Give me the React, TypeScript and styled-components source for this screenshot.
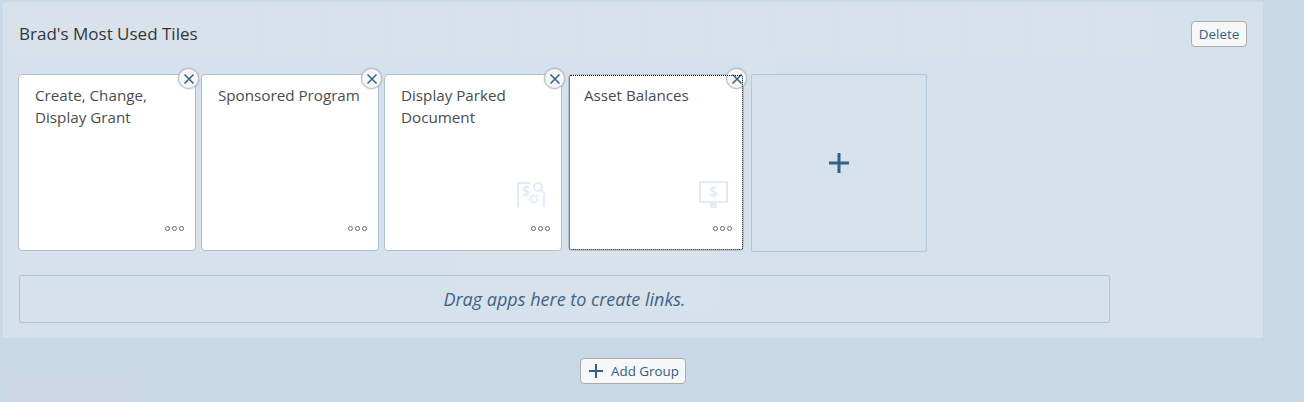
import React from "react";
import styled, { createGlobalStyle } from "styled-components";

const Global = createGlobalStyle`
  html, body { margin: 0; padding: 0; height: 100%; }
  body { background: #c8d8e6; font-family: "Open Sans", "Noto Sans", sans-serif; overflow: hidden; }
`;

const solid = (c: string) => `linear-gradient(${c}, ${c})`;
const base = "#d5e2ed";
const block = "#d9e1ea";

const Page = styled.div`
  width: 1304px;
  height: 402px;
  padding-top: 2px;
  box-sizing: border-box;
  display: flex;
  flex-direction: column;
  overflow: hidden;
  background: ${solid("#ccd8e5")} 10px 372px / 120px 30px no-repeat;
`;

const Section = styled.section`
  width: 1260px;
  height: 336px;
  margin-left: 3px;
  box-sizing: border-box;
  padding: 0 16px 0 15px;
  border-radius: 2px;
  background-color: ${base};
  background-image:
    ${solid(base)},
    ${solid(block)},
    ${solid(base)},
    linear-gradient(90deg, #d5e1ec 0 9px, ${block} 9px 64px),
    ${solid(block)},
    ${solid("#d8e2eb")};
  background-position:
    1151px 0,
    7px 0,
    0 0,
    254px 0,
    457px 248px,
    740px 51px;
  background-size:
    109px 51px,
    247px 51px,
    254px 51px,
    64px 51px,
    256px 58px,
    35px 21px;
  background-repeat: no-repeat, no-repeat, no-repeat, repeat-x, no-repeat, no-repeat;
  display: flex;
  flex-direction: column;
`;

const Header = styled.header`
  display: flex;
  justify-content: space-between;
  align-items: center;
  height: 64px;
  padding: 0 0 0 1px;
`;

const Title = styled.h2`
  margin: -2px 0 0;
  font-size: 17px;
  font-weight: 400;
  color: #32363a;
`;

const SmallButton = styled.button`
  height: 26px;
  box-sizing: border-box;
  display: inline-flex;
  align-items: center;
  background: #f7f7f7;
  border: 1px solid #ababab;
  border-radius: 4px;
  color: #346187;
  font-family: inherit;
  font-size: 13.4px;
`;

const DeleteButton = styled(SmallButton)`
  width: 56px;
  justify-content: center;
  padding: 0;
`;

const TileRow = styled.div`
  display: flex;
  gap: 5px;
  margin-top: 8px;
  align-items: flex-start;
`;

const Tile = styled.div<{ $focused?: boolean }>`
  position: relative;
  width: ${(p) => (p.$focused ? "176px" : "178px")};
  margin-left: ${(p) => (p.$focused ? "1px" : "0")};
  height: 177px;
  box-sizing: border-box;
  background: #fff;
  border: 1px solid #b2bfcc;
  border-radius: 4px;
  padding: 9px ${(p) => (p.$focused ? "15px" : "16px")};
  color: #4a4c4f;
  font-size: 15.2px;
  line-height: 22px;
  ${(p) =>
    p.$focused &&
    `&::after {
      content: "";
      position: absolute;
      inset: 0;
      border: 1px dotted #000;
      border-radius: 2px;
      z-index: 2;
      pointer-events: none;
    }`}
`;

const Close = styled.span`
  position: absolute;
  top: -7px;
  right: -4px;
  width: 21px;
  height: 21px;
  box-sizing: border-box;
  border-radius: 50%;
  background: #f5f6f7;
  border: 1px solid #b8b8b8;
  box-shadow: 0 0 2px rgba(0, 0, 0, 0.2);
  display: flex;
  align-items: center;
  justify-content: center;
  color: #346187;
`;

const More = styled.span`
  position: absolute;
  right: 11px;
  bottom: 19px;
  display: flex;
  gap: 2px;
`;

const Dot = styled.i`
  width: 5px;
  height: 5px;
  box-sizing: border-box;
  border: 1px solid #6a6d70;
  border-radius: 50%;
`;

const TileIcon = styled.svg`
  position: absolute;
  right: 15px;
  bottom: 41px;
  width: 30px;
  height: 28px;
`;

const AddTile = styled.div`
  width: 176px;
  height: 178px;
  margin-left: 2px;
  box-sizing: border-box;
  border: 1px solid #b4c8dc;
  border-radius: 2px;
  background: #d6e2ed;
  display: flex;
  align-items: center;
  justify-content: center;
  color: #346187;
`;

const LinkArea = styled.div`
  margin: 23px 0 0 1px;
  width: 1091px;
  height: 48px;
  box-sizing: border-box;
  border: 1px solid #b2c3d3;
  border-radius: 2px;
  display: flex;
  align-items: center;
  justify-content: center;
  color: #3f6488;
  font-size: 18px;
  font-style: italic;
`;

const Footer = styled.div`
  width: 1266px;
  display: flex;
  justify-content: center;
  margin-top: 20px;
`;

const AddGroup = styled(SmallButton)`
  width: 106px;
  padding: 0 0 0 8px;
  gap: 8px;
`;

const CloseIcon = () => (
  <svg width="10" height="10" viewBox="0 0 10 10" fill="none" stroke="currentColor" strokeWidth="1.5">
    <path d="M0.5 0.5 9.5 9.5M9.5 0.5 0.5 9.5" />
  </svg>
);

const PlusIcon = ({ size, width }: { size: number; width: number }) => (
  <svg width={size} height={size} viewBox={`0 0 ${size} ${size}`} stroke="currentColor" strokeWidth={width} fill="none">
    <path d={`M0 ${size / 2}H${size}M${size / 2} 0V${size}`} />
  </svg>
);

const Dots = () => (
  <More>
    <Dot />
    <Dot />
    <Dot />
  </More>
);

const ParkedIcon = () => (
  <TileIcon viewBox="0 0 30 28" fill="none" stroke="#e3ecf5" strokeWidth="2">
    <path d="M2 26V2H14M28 14V26" />
    <circle cx="22" cy="6" r="4" />
    <path d="M25 9 29 13" />
    <circle cx="18" cy="18" r="3.5" strokeDasharray="2 1" strokeWidth="3" />
    <text x="6" y="15" fontSize="14" fontWeight="700" fill="#e3ecf5" stroke="none" fontFamily="Open Sans">$</text>
  </TileIcon>
);

const MonitorIcon = () => (
  <TileIcon viewBox="0 0 30 28" fill="none" stroke="#e3ecf5" strokeWidth="2">
    <rect x="2" y="1" width="27" height="20" />
    <path d="M12 21H19V27H12Z" fill="#e3ecf5" stroke="none" />
    <text x="11" y="16" fontSize="15" fontWeight="700" fill="#e3ecf5" stroke="none" fontFamily="Open Sans">$</text>
  </TileIcon>
);

export default function App() {
  return (
    <Page>
      <Global />
      <Section>
        <Header>
          <Title>Brad's Most Used Tiles</Title>
          <DeleteButton>Delete</DeleteButton>
        </Header>
        <TileRow>
          <Tile>
            Create, Change,
            <br />
            Display Grant
            <Close><CloseIcon /></Close>
            <Dots />
          </Tile>
          <Tile>
            Sponsored Program
            <Close><CloseIcon /></Close>
            <Dots />
          </Tile>
          <Tile>
            Display Parked
            <br />
            Document
            <ParkedIcon />
            <Close><CloseIcon /></Close>
            <Dots />
          </Tile>
          <Tile $focused>
            Asset Balances
            <MonitorIcon />
            <Close><CloseIcon /></Close>
            <Dots />
          </Tile>
          <AddTile><PlusIcon size={20} width={3} /></AddTile>
        </TileRow>
        <LinkArea>Drag apps here to create links.</LinkArea>
      </Section>
      <Footer>
        <AddGroup><PlusIcon size={14} width={2} />Add Group</AddGroup>
      </Footer>
    </Page>
  );
}
